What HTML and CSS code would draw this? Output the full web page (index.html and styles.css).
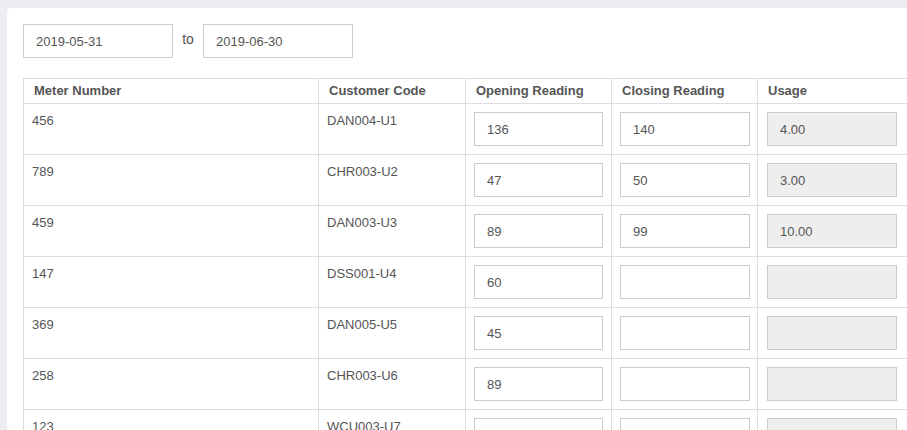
FILE: index.html
```html
<!DOCTYPE html>
<html>
<head>
<meta charset="utf-8">
<link rel="stylesheet" href="styles.css">
</head>
<body>
<div class="card">
  <div class="range">
    <input class="field date" type="text" value="2019-05-31">
    <span class="to">to</span>
    <input class="field date" type="text" value="2019-06-30">
  </div>
  <table class="grid">
    <colgroup>
      <col class="c1"><col class="c2"><col class="c3"><col class="c4"><col class="c5">
    </colgroup>
    <thead>
      <tr><th>Meter Number</th><th>Customer Code</th><th>Opening Reading</th><th>Closing Reading</th><th>Usage</th></tr>
    </thead>
    <tbody>
      <tr><td>456</td><td>DAN004-U1</td><td><input class="field cell open" value="136"></td><td><input class="field cell" value="140"></td><td><input class="field cell ro" value="4.00" readonly></td></tr>
      <tr><td>789</td><td>CHR003-U2</td><td><input class="field cell open" value="47"></td><td><input class="field cell" value="50"></td><td><input class="field cell ro" value="3.00" readonly></td></tr>
      <tr><td>459</td><td>DAN003-U3</td><td><input class="field cell open" value="89"></td><td><input class="field cell" value="99"></td><td><input class="field cell ro" value="10.00" readonly></td></tr>
      <tr><td>147</td><td>DSS001-U4</td><td><input class="field cell open" value="60"></td><td><input class="field cell" value=""></td><td><input class="field cell ro" value="" readonly></td></tr>
      <tr><td>369</td><td>DAN005-U5</td><td><input class="field cell open" value="45"></td><td><input class="field cell" value=""></td><td><input class="field cell ro" value="" readonly></td></tr>
      <tr><td>258</td><td>CHR003-U6</td><td><input class="field cell open" value="89"></td><td><input class="field cell" value=""></td><td><input class="field cell ro" value="" readonly></td></tr>
      <tr><td>123</td><td>WCU003-U7</td><td><input class="field cell open" value=""></td><td><input class="field cell" value=""></td><td><input class="field cell ro" value="" readonly></td></tr>
    </tbody>
  </table>
</div>
</body>
</html>
```
FILE: styles.css
```css
html, body {
  margin: 0;
  padding: 0;
  background: #ecedf0;
  overflow: hidden;
  height: 430px;
}
body {
  padding: 8px 0 0 7px;
  font-family: "Liberation Sans", Arial, sans-serif;
  font-size: 13px;
  color: #555;
  box-sizing: border-box;
  width: 907px;
}
.card {
  background: #fff;
  width: 915px;
  height: 600px;
  border-radius: 4px 0 0 0;
  padding: 16px 0 0 16px;
  box-sizing: border-box;
}
.range {
  display: flex;
  align-items: center;
  height: 34px;
}
.field {
  font-family: "Liberation Sans", Arial, sans-serif;
  font-size: 13px;
  color: #555;
  border: 1px solid #ccc;
  border-radius: 0;
  background: #fff;
  height: 34px;
  padding: 6px 12px;
  box-sizing: border-box;
  outline: none;
  margin: 0;
}
.date {
  width: 150px;
}
.to {
  width: 30px;
  text-align: center;
  padding-bottom: 4px;
  font-size: 14px;
}
.grid {
  margin-top: 20px;
  border-collapse: collapse;
  table-layout: fixed;
  width: 884px;
}
.c1 { width: 295px; }
.c2 { width: 147px; }
.c3 { width: 146px; }
.c4 { width: 146px; }
.c5 { width: 150px; }
.grid th, .grid td {
  border: 1px solid #ddd;
  text-align: left;
  vertical-align: top;
}
.grid th {
  font-weight: bold;
  padding: 4px 10px;
  line-height: 16px;
}
.grid td {
  padding: 8px;
  line-height: 18px;
}
.cell {
  width: 130px;
  display: block;
}
.open {
  width: 129px;
}
.ro {
  background: #eee;
  margin-left: 1px;
}
```
